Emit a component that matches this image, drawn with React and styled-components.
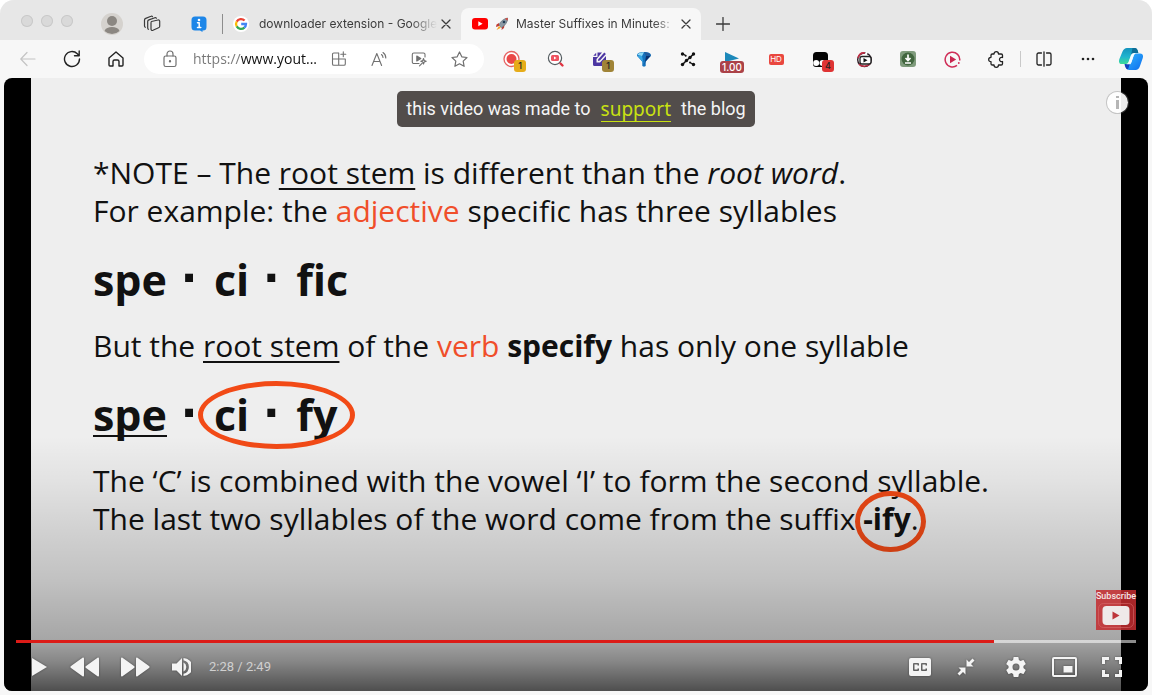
import React from "react";
import styled, { createGlobalStyle } from "styled-components";

const Global = createGlobalStyle`
  * { box-sizing: border-box; }
  body { margin: 0; background: #fff; font-family: Inter, "Liberation Sans", sans-serif; }
  button { border: 0; padding: 0; background: none; color: inherit; font: inherit; }
`;

const Browser = styled.div`
  min-height: 100vh;
  display: flex;
  flex-direction: column;
  background: #f7f7f7;
  border-radius: 14px 14px 0 0;
  overflow: hidden;
`;

const TabStrip = styled.header`
  height: 40px;
  display: flex;
  align-items: flex-end;
  background: #e7e7e7;
  color: #3b3b3b;
`;

const TrafficLights = styled.div`
  display: flex;
  gap: 8px;
  padding: 0 27px 13px 21px;
`;

const Light = styled.button`
  width: 12px;
  height: 12px;
  border-radius: 50%;
  background: #d9d9d9;
  box-shadow: inset 0 0 0 1px #c9c9c9;
`;

const StripButton = styled.button`
  width: ${(p) => p.$width || 40}px;
  height: 32px;
  display: grid;
  place-items: center;
  flex: none;
`;

const Separator = styled.span`
  width: 1px;
  height: ${(p) => p.$height}px;
  margin: ${(p) => p.$margin};
  background: ${(p) => p.$color};
  flex: none;
`;

const Tab = styled.div`
  width: ${(p) => p.$width}px;
  height: 32px;
  display: flex;
  align-items: center;
  gap: 8px;
  padding: 0 8px 0 ${(p) => (p.$active ? 11 : 10)}px;
  border-radius: 8px 8px 0 0;
  background: ${(p) => (p.$active ? "#f7f7f7" : "transparent")};
`;

const TabLabel = styled.a`
  flex: 1;
  min-width: 0;
  margin-left: ${(p) => (p.$active ? 0 : 2)}px;
  margin-right: -8px;
  overflow: hidden;
  white-space: nowrap;
  font-size: 12px;
  line-height: 18px;
  color: #3b3b3b;
  text-decoration: none;
  mask-image: linear-gradient(90deg, #000 84%, transparent 99%);
`;

const CloseButton = styled.button`
  width: 14px;
  height: 14px;
  display: grid;
  place-items: center;
`;

const Toolbar = styled.nav`
  height: 38px;
  display: flex;
  align-items: center;
  padding-left: 6px;
  color: #222;
`;

const ToolButton = styled.button`
  position: relative;
  width: ${(p) => p.$width || 44}px;
  height: 32px;
  flex: none;
  display: grid;
  place-items: center;
`;

const AddressBar = styled.div`
  flex: 1;
  min-width: 0;
  height: 30px;
  margin: 0 6px;
  padding: 0 5px 0 17px;
  display: flex;
  align-items: center;
  border-radius: 15px;
  background: #fff;
  color: #707070;
`;

const UrlInput = styled.input`
  flex: 1;
  min-width: 0;
  margin-left: 14px;
  padding: 0;
  border: 0;
  outline: 0;
  font: 14px/20px "Open Sans", sans-serif;
  color: transparent;
  background: linear-gradient(90deg, #777 0 48px, #111 48px);
  background-clip: text;
  -webkit-background-clip: text;
`;

const Badge = styled.span`
  position: absolute;
  left: ${(p) => (p.$wide ? 10 : 24)}px;
  top: ${(p) => (p.$wide ? 18 : 17)}px;
  width: ${(p) => (p.$wide ? 24 : 12)}px;
  height: 12px;
  border-radius: 3px;
  background: ${(p) => p.$color};
  color: ${(p) => (p.$wide ? "#fff" : "#222")};
  font-size: ${(p) => (p.$wide ? 10 : 9)}px;
  font-weight: 500;
  line-height: 12px;
  text-align: center;
`;

const Player = styled.main`
  flex: 1;
  display: grid;
  grid-template: 1fr / minmax(0, 1fr);
  margin: 0 4px 4px;
  border-radius: 8px;
  overflow: hidden;
  background: #000;
`;

const Slide = styled.article`
  grid-area: 1 / 1;
  margin: 0 27px;
  padding: 76px 62px;
  background: #eee;
  color: #111;
  font-family: "Open Sans", "Noto Sans", sans-serif;
`;

const Sentence = styled.p`
  margin: 0;
  font-size: 30px;
  line-height: 38px;
  white-space: nowrap;
`;

const Syllables = styled.p`
  margin: 0;
  height: 97px;
  font-size: 43px;
  font-weight: 700;
  line-height: 100px;
  white-space: nowrap;
`;

const Dot = styled.span`
  margin: 0 3px;
  font-family: "Liberation Sans", sans-serif;
  font-size: 56px;
  line-height: 1px;
`;

const Underlined = styled.span`
  text-decoration: underline;
  text-decoration-thickness: 2px;
  text-underline-offset: 4px;
  text-decoration-skip-ink: none;
`;

const Accent = styled.span`
  color: #f04e2a;
`;

const Circled = styled.span`
  position: relative;
`;

const Ring = styled.span`
  position: absolute;
  inset: ${(p) => p.$inset};
  border: 5px solid #f24a16;
  border-radius: 50%;
`;

const Overlay = styled.section`
  grid-area: 1 / 1;
  z-index: 1;
  display: flex;
  flex-direction: column;
  background: linear-gradient(
    0deg,
    rgba(0, 0, 0, 0.67) 0,
    rgba(0, 0, 0, 0.43) 30px,
    rgba(0, 0, 0, 0.3) 52px,
    rgba(0, 0, 0, 0.19) 111px,
    rgba(0, 0, 0, 0.13) 155px,
    rgba(0, 0, 0, 0.05) 210px,
    transparent 255px
  );
`;

const OverlayTop = styled.div`
  display: grid;
  grid-template-columns: 1fr auto 1fr;
  align-items: start;
  padding: 13px 20px 0;
`;

const Banner = styled.p`
  grid-column: 2;
  height: 36px;
  margin: 0;
  padding: 0 9px;
  display: flex;
  align-items: center;
  gap: 10px;
  border-radius: 5px;
  background: #524d4b;
  color: #f5f5f5;
  font-family: Roboto, sans-serif;
  font-size: 18px;
  line-height: 24px;
  white-space: nowrap;
`;

const SupportLink = styled.a`
  color: #c9e112;
  font-family: "Noto Sans", sans-serif;
  font-size: 19px;
  line-height: 24px;
  text-decoration: none;
  border-bottom: 1px solid #c9e112;
`;

const InfoButton = styled.button`
  justify-self: end;
  width: 21px;
  height: 21px;
  margin-top: 1px;
  border-radius: 50%;
  background: rgba(255, 255, 255, 0.93);
  box-shadow: 0 0 0 1px rgba(120, 120, 120, 0.35);
  display: grid;
  place-items: center;
`;

const Subscribe = styled.button`
  align-self: flex-end;
  width: 40px;
  height: 40px;
  margin: auto 12px 10px 0;
  display: flex;
  flex-direction: column;
  align-items: center;
  justify-content: space-between;
  background: rgba(196, 44, 48, 0.86);
  color: #f5e6e6;
  font-family: Roboto, sans-serif;
  font-size: 9px;
  font-weight: 500;
  line-height: 12px;
`;

const Seek = styled.input`
  appearance: none;
  height: 3px;
  margin: 0 12px;
  background: linear-gradient(
    90deg,
    #dc1b17 ${(p) => p.$played}%,
    rgba(255, 255, 255, 0.55) ${(p) => p.$played}%
  );
  &::-webkit-slider-thumb { appearance: none; width: 0; height: 0; }
`;

const Controls = styled.div`
  height: 48px;
  display: flex;
  align-items: center;
  padding: 0 8px 0 11px;
  color: #f4f4f4;
`;

const ControlButton = styled.button`
  width: ${(p) => p.$width || 48}px;
  height: 48px;
  display: grid;
  place-items: center;
  filter: drop-shadow(0 0 1px rgba(0, 0, 0, 0.4));
`;

const Time = styled.span`
  flex: 1;
  padding-left: 10px;
  font: 13px/16px Roboto, sans-serif;
  color: #d0d0d0;
`;

const Icon = ({ w = 20, h = w, box, line, children }) => (
  <svg
    width={w}
    height={h}
    viewBox={box || `0 0 ${w} ${h}`}
    fill={line ? "none" : "currentColor"}
    stroke={line ? "currentColor" : "none"}
    strokeWidth={line}
    strokeLinecap="round"
    strokeLinejoin="round"
    aria-hidden="true"
  >
    {children}
  </svg>
);

const Close = () => (
  <CloseButton aria-label="Close tab">
    <Icon w={10} line={1.3}><path d="M1 1l8 8M9 1L1 9" /></Icon>
  </CloseButton>
);

const GoogleLogo = () => (
  <svg width="16" height="16" viewBox="0 0 16 16" aria-hidden="true">
    <circle cx="8" cy="8" r="8" fill="#fff" />
    <g fill="none" strokeWidth="2.3">
      <path d="M11.6 4.5A5 5 0 0 0 3.7 5.6" stroke="#ea4335" />
      <path d="M3.7 5.5a5 5 0 0 0 0 5" stroke="#fbbc05" />
      <path d="M3.7 10.4a5 5 0 0 0 7.7 1.2" stroke="#34a853" />
      <path d="M8.2 8h4.8a5 5 0 0 1-1.7 3.7" stroke="#4285f4" />
    </g>
  </svg>
);

const YouTubeLogo = () => (
  <svg width="16" height="12" viewBox="0 0 16 12" aria-hidden="true">
    <rect width="16" height="11.5" rx="3" fill="#f00" />
    <path d="M6.3 3.3v5l4.3-2.5z" fill="#fff" />
  </svg>
);

const Rocket = () => (
  <svg width="12" height="14" viewBox="0 0 12 14" aria-hidden="true">
    <path d="M3 6L.5 7.5 0 10l3-1zM6 10l-.5 3L8 11l.5-3z" fill="#c43a31" />
    <path d="M3 8C4.5 4 8 1.5 11.8 1 11.7 5 9 8.7 5.5 10.6z" fill="#8b9aa5" stroke="#56626d" strokeWidth=".6" />
    <path d="M9 1.8c.8-.4 1.8-.7 2.8-.8 0 1-.2 2-.5 2.8z" fill="#d9483b" />
    <circle cx="8" cy="5" r="1.3" fill="#243d55" />
    <path d="M3 9l-2.5 4L5 10.7z" fill="#f6a623" />
  </svg>
);

const RecordIcon = () => (
  <svg width="18" height="18" viewBox="0 0 18 18" aria-hidden="true">
    <circle cx="8.5" cy="9" r="7.5" fill="#fff" stroke="#e66363" strokeWidth="1.3" />
    <circle cx="8.5" cy="9" r="5" fill="#ea4848" />
  </svg>
);

const VideoSearchIcon = () => (
  <svg width="18" height="18" viewBox="0 0 18 18" aria-hidden="true">
    <circle cx="8" cy="8" r="6.6" fill="#fff" stroke="#555d61" strokeWidth="1.2" />
    <rect x="4" y="5" width="8" height="6" rx="1.5" fill="#ee5360" />
    <path d="M7 6.5v3L9.5 8z" fill="#fff" />
    <path d="M13.5 13.5l2 2" stroke="#df3341" strokeWidth="2.4" strokeLinecap="round" />
  </svg>
);

const NotesIcon = () => (
  <svg width="18" height="18" viewBox="0 0 18 18" aria-hidden="true">
    <path d="M6.500 2.500H11L5.500 9v3.500H9l6-6.500v8.500a1.500 1.500 0 0 1-1.500 1.500h-10A1.500 1.500 0 0 1 2 14.500V7h4.500z" fill="#4c36a2" />
    <path d="M5.200 2.800v2.900H2.300z" fill="#4c36a2" />
    <path d="M7 11l.3-1.800 6-6.700 1.600 1.500-6 6.600z" fill="#4c36a2" />
  </svg>
);

const GemIcon = () => (
  <svg width="16" height="16" viewBox="0 0 16 16" aria-hidden="true">
    <path d="M1 4.500C1 2.500 3.200 1 8 1s7 1.500 7 3.500c0 .8-4.800 5-5.300 6.500v4l-1.700.8L6.300 15v-4C5.800 9.500 1 5.300 1 4.500z" fill="#1673bd" />
    <path d="M1.500 4C2 2 5 1.300 8 1.300L6 5z" fill="#8edbf8" />
    <path d="M1.300 4.800L6 5l1.600 8-1.100-2.500z" fill="#35a7e4" />
    <path d="M8 1.300c3.500 0 6 1 6.700 3L10 5z" fill="#215b9d" />
    <path d="M14.600 4.800L10 5l-1.500 9 1-3.500z" fill="#0b316f" />
  </svg>
);

const NodesIcon = () => (
  <svg width="16" height="16" viewBox="0 0 16 16" aria-hidden="true">
    <path d="M2.500 13.500L6.500 9.500l3.500-3L13.500 3" stroke="#111" strokeWidth="1.600" fill="none" />
    <path d="M2.500 2.500l3 2M10 11.500l3.500 2" stroke="#111" strokeWidth="1.200" />
    {[[2.5, 3], [13.5, 3], [6.5, 9.5], [10, 6.5], [2.5, 13.5], [13.5, 13.5]].map(([x, y]) => (
      <circle key={`${x}-${y}`} cx={x} cy={y} r="1.7" fill="#111" />
    ))}
    <circle cx="5.700" cy="4.700" r="1" fill="#111" />
    <circle cx="10" cy="11.500" r="1" fill="#111" />
  </svg>
);

const HdIcon = styled.span`
  width: 15px;
  height: 11px;
  border-radius: 2px;
  background: #e9473f;
  color: #fff;
  font-size: 8px;
  line-height: 11px;
`;

const MaskIcon = () => (
  <svg width="17" height="17" viewBox="0 0 17 17" aria-hidden="true">
    <path d="M4.500 1h8A3.500 3.500 0 0 1 16 4.500V12H1V4.500A3.500 3.500 0 0 1 4.500 1z" fill="#050505" />
    <path d="M1 10h15v3a3 3 0 0 1-3 3H4a3 3 0 0 1-3-3z" fill="#050505" />
    <circle cx="4.200" cy="12" r="3" fill="#fff" />
    <circle cx="10.500" cy="12" r="3" fill="#fff" />
  </svg>
);

const TvIcon = () => (
  <svg width="17" height="17" viewBox="0 0 17 17" aria-hidden="true">
    <circle cx="8.5" cy="8.8" r="6.8" fill="#fff" stroke="#2c1c25" strokeWidth="1.4" />
    <path d="M2 7c1-4 4-5.5 7-5M3 13c2 3 8 3 11 0" stroke="#c02f45" strokeWidth="1.5" fill="none" />
    <path d="M8.500 6l2.500-5" stroke="#fff" strokeWidth="2" />
    <rect x="4" y="5.5" width="11" height="7.500" rx="2" fill="#fff" stroke="#222" strokeWidth="1.3" />
    <path d="M7.5 7v4.5l4-2.200z" fill="#111" />
  </svg>
);

const DownloadIcon = () => (
  <svg width="16" height="16" viewBox="0 0 16 16" aria-hidden="true">
    <rect width="16" height="16" rx="3" fill="#7f9b7c" />
    <circle cx="8" cy="8" r="6.5" fill="#42663f" />
    <path d="M8 3.5V9M5.5 7L8 9.5 10.5 7M5 12h6" stroke="#fff" strokeWidth="1.7" fill="none" />
  </svg>
);

const PlayCircleIcon = () => (
  <svg width="17" height="17" viewBox="0 0 17 17" aria-hidden="true">
    <path d="M13 14.300A7.300 7.300 0 1 1 15.700 9.500" fill="none" stroke="#cf2d57" strokeWidth="1.5" />
    <circle cx="14.800" cy="12" r=".9" fill="#cf2d57" />
    <path d="M6 4.7v7.6l6.2-3.8z" fill="#c8264f" />
  </svg>
);

const CopilotLogo = () => (
  <svg width="24" height="22" viewBox="0 0 24 22" aria-hidden="true">
    <defs>
      <linearGradient id="copilotLeft" x1="0" y1="0" x2="0" y2="1">
        <stop offset="0" stopColor="#1593bd" />
        <stop offset=".55" stopColor="#20b5cf" />
        <stop offset="1" stopColor="#3ddc98" />
      </linearGradient>
      <linearGradient id="copilotRight" x1="0" y1="0" x2="1" y2="1">
        <stop offset="0" stopColor="#36b8ff" />
        <stop offset="1" stopColor="#0b6ced" />
      </linearGradient>
    </defs>
    <path d="M8 0h7.500c2.300 0 3.200 1.800 3.800 5H15c-2 0-2.800 1-3.400 3L9.500 14c-.6 1.500-1.600 2-3.500 2H3c-3 0-3.500-2.200-2.600-5L3.500 3.500C4.500 1.200 6 0 8 0z" fill="url(#copilotLeft)" />
    <path d="M13.500 0h2.300c2 0 2.900 1.800 3.500 5H15c-1.500 0-2.400.7-3 2z" fill="#0f6d96" />
    <path d="M17 5.500h4c3 0 3.500 2.200 2.600 5L21 18c-.9 2.500-2.300 4-4.500 4h-6c-2.300 0-3.300-1.800-3.900-5H9c2 0 3-1 3.600-3l2-6c.5-1.600 1-2.500 2.400-2.500z" fill="url(#copilotRight)" />
    <path d="M5.500 16H8c2 0 3-.8 3.600-2.500L9.500 20c-.3 1-.8 1.700-1.500 1.300-1.300-.8-2-3-2.500-5.300z" fill="#1344bd" />
    <path d="M13.800 5.500h3c-1.300.3-1.900 1.300-2.400 2.700L12.300 14c-.5 1.500-1.500 2.300-3.500 2.300H7c1.700-.2 2.400-1.100 2.900-2.400L12 8c.5-1.300 1-2.100 1.800-2.500z" fill="#f4fdff" />
  </svg>
);

const PlayTile = () => (
  <svg width="36" height="27" viewBox="0 0 36 27" aria-hidden="true">
    <rect x=".5" y=".5" width="35" height="24" rx="5" fill="none" stroke="#d9696b" strokeWidth=".6" />
    <rect x="4.500" y="3" width="27" height="19" rx="4" fill="#efe9e9" />
    <path d="M14.500 8.500v8l7-4z" fill="#bd343a" />
  </svg>
);

export default function App() {
  return (
    <>
      <Global />
      <Browser>
        <TabStrip>
          <TrafficLights>
            <Light aria-label="Close" />
            <Light aria-label="Minimize" />
            <Light aria-label="Zoom" />
          </TrafficLights>
          <StripButton $width={24} aria-label="Profile">
            <Icon w={22}>
              <circle cx="11" cy="11" r="11" fill="#d5d2ce" />
              <circle cx="11" cy="8" r="5" fill="#8b8782" />
              <path d="M3.500 18c1-3 4-4 7.500-4s6.500 1 7.500 4a11 11 0 0 1-15 0z" fill="#8b8782" />
            </Icon>
          </StripButton>
          <StripButton $width={56} aria-label="Workspaces">
            <Icon w={18} line={1.2}>
              <path d="M8.500 6.500l6.500-1.500c1-.2 1.700.3 1.700 1.200v5c0 .8-.4 1.300-1.200 1.600l-5.500 2.500c-1.200.5-2-.1-2-1.200V8c0-.8 0-1.300.5-1.500z" />
              <path d="M5.500 14.300c-.6-.2-.8-.7-.8-1.300V6.500c0-.9.400-1.300 1.200-1.600l6-2.200c.7-.2 1.200 0 1.500.5" />
              <path d="M2.300 12.300c-.5-.3-.8-.7-.8-1.300V5c0-.8.400-1.300 1.200-1.600L8 1.300c.7-.3 1.200-.1 1.500.4" />
            </Icon>
          </StripButton>
          <StripButton $width={38} aria-label="Information tab">
            <Icon w={16}>
              <path d="M4 .5h8A3.500 3.500 0 0 1 15.500 4v7a3.500 3.500 0 0 1-3.500 3.500h-.5V16L9 14.500H4A3.500 3.500 0 0 1 .5 11V4A3.500 3.500 0 0 1 4 .5z" fill="#1d86e8" />
              <circle cx="8" cy="4" r="1.300" fill="#fff" />
              <path d="M6.500 6.800H8.200v4.700M6.500 11.500h3.300" stroke="#fff" strokeWidth="1.500" fill="none" />
            </Icon>
          </StripButton>
          <Separator $height={20} $margin="0 0 6px 4px" $color="#8d8d8d" />
          <Tab $width={238}>
            <GoogleLogo />
            <TabLabel href="#search">downloader extension - Google</TabLabel>
            <Close />
          </Tab>
          <Tab $width={240} $active>
            <YouTubeLogo />
            <Rocket />
            <TabLabel href="#video" $active>Master Suffixes in Minutes:</TabLabel>
            <Close />
          </Tab>
          <StripButton $width={43} aria-label="New tab">
            <Icon w={14} line={1.300}><path d="M7 .5v13M.5 7h13" /></Icon>
          </StripButton>
        </TabStrip>

        <Toolbar>
          <ToolButton aria-label="Back">
            <Icon w={16} line={1.200}><g stroke="#c4c4c4"><path d="M15 8H1M7 1.500L.8 8 7 14.500" /></g></Icon>
          </ToolButton>
          <ToolButton aria-label="Reload">
            <Icon w={18} line={1.400}><path d="M16.500 9A7.500 7.500 0 1 1 14.300 3.700L16 5.500M16.200 1v4.700h-4.700" /></Icon>
          </ToolButton>
          <ToolButton aria-label="Home">
            <Icon w={16} line={1.400}><path d="M1 7L8 1l7 6v7a1 1 0 0 1-1 1h-3V10.500A1.500 1.500 0 0 0 9.500 9h-3A1.500 1.500 0 0 0 5 10.500V15H2a1 1 0 0 1-1-1z" /></Icon>
          </ToolButton>
          <AddressBar>
            <Icon w={18} line={1.200}>
              <rect x="3" y="6" width="12" height="10.500" rx="1.800" />
              <path d="M6 6V4a3 3 0 0 1 6 0v2" />
              <circle cx="9" cy="11.300" r=".6" fill="currentColor" />
            </Icon>
            <UrlInput aria-label="Address" defaultValue="https://www.yout..." />
            <ToolButton $width={40} aria-label="Apps">
              <Icon w={16} line={1.100}><path d="M7.500 2H2.800A1.300 1.300 0 0 0 1.500 3.300V13A1.300 1.300 0 0 0 2.800 14.300H13A1.300 1.300 0 0 0 14.300 13V8H1.500M7.700 2v12.300M12.300.8v5M9.800 3.300h5" /></Icon>
            </ToolButton>
            <ToolButton $width={40} aria-label="Read aloud">
              <Icon w={16} line={1.100}><path d="M1 14.500L5.800 2.500l4.800 12M2.600 10.500H9M10.500 3.500a4 4 0 0 1 1.500 3M12 1.500a6.500 6.500 0 0 1 2.800 5.500" /></Icon>
            </ToolButton>
            <ToolButton $width={40} aria-label="Enhance video">
              <Icon w={16} line={1.100}>
                <path d="M8 12.500H2.800A1.500 1.500 0 0 1 1.300 11V3.500A1.500 1.500 0 0 1 2.800 2H12.500A1.500 1.500 0 0 1 14 3.500V6" />
                <path d="M5.800 5v5l4-2.500z" fill="currentColor" />
                <path d="M12.500 7.500l.7 2 2 .7-2 .8-.7 2-.7-2-2-.8 2-.7zM8.500 14.800l2.500-2.500" />
              </Icon>
            </ToolButton>
            <ToolButton $width={40} aria-label="Favorite">
              <Icon w={17} line={1.200}><path d="M8.500 1l2.300 4.800 5.200.7-3.800 3.600.9 5.200-4.600-2.500-4.600 2.500.9-5.200L1 6.500l5.200-.7z" /></Icon>
            </ToolButton>
          </AddressBar>
          <ToolButton aria-label="Screen recorder"><RecordIcon /><Badge $color="#e6ac19">1</Badge></ToolButton>
          <ToolButton aria-label="Video search"><VideoSearchIcon /></ToolButton>
          <ToolButton aria-label="Notes"><NotesIcon /><Badge $color="#a08437">1</Badge></ToolButton>
          <ToolButton aria-label="Gem extension"><GemIcon /></ToolButton>
          <ToolButton aria-label="Nodes extension"><NodesIcon /></ToolButton>
          <ToolButton aria-label="Video speed">
            <Icon w={16}><path d="M1 1v10l14-3.500z" fill="#1d89ba" /></Icon>
            <Badge $wide $color="#ab4248">1.00</Badge>
          </ToolButton>
          <ToolButton aria-label="Auto HD"><HdIcon>HD</HdIcon></ToolButton>
          <ToolButton aria-label="Scripts"><MaskIcon /><Badge $color="#df3434">4</Badge></ToolButton>
          <ToolButton aria-label="TV extension"><TvIcon /></ToolButton>
          <ToolButton aria-label="Downloader"><DownloadIcon /></ToolButton>
          <ToolButton aria-label="Player extension"><PlayCircleIcon /></ToolButton>
          <ToolButton aria-label="Extensions">
            <Icon w={17} line={1.300}><path d="M3 4.300C3 3.500 3.500 3 4.300 3H6c0-1.500 1-2.300 2.300-2.300S10.500 1.500 10.500 3h2.700c.8 0 1.300.5 1.300 1.300v2.200c-1.700-.5-3 .5-3 2s1.300 2.500 3 2v2.200c0 .8-.5 1.300-1.300 1.300h-2.700c0 1.500-.9 2.300-2.200 2.300S6 15.500 6 14H4.300C3.500 14 3 13.500 3 12.700v-2C1.500 10.700.7 9.800.7 8.500S1.500 6.300 3 6.300z" /></Icon>
          </ToolButton>
          <Separator $height={16} $margin="0 1px 0 2px" $color="#c9c9c9" />
          <ToolButton aria-label="Split screen">
            <Icon w={16} line={1.300}><path d="M5.500 2H2.500A1.500 1.500 0 0 0 1 3.500v9A1.500 1.500 0 0 0 2.500 14h3M8 .8v14.400M10.500 2h3A1.500 1.500 0 0 1 15 3.500v9a1.500 1.500 0 0 1-1.500 1.500h-3" /></Icon>
          </ToolButton>
          <ToolButton aria-label="More">
            <Icon w={14}><circle cx="2" cy="7" r="1.300" /><circle cx="7" cy="7" r="1.300" /><circle cx="12" cy="7" r="1.300" /></Icon>
          </ToolButton>
          <ToolButton $width={42} aria-label="Copilot"><CopilotLogo /></ToolButton>
        </Toolbar>

        <Player>
          <Slide>
            <Sentence>*NOTE – The <Underlined>root stem</Underlined> is different than the <em>root word</em>.</Sentence>
            <Sentence>For example: the <Accent>adjective</Accent> specific has three syllables</Sentence>
            <Syllables>spe <Dot>·</Dot> ci <Dot>·</Dot> fic</Syllables>
            <Sentence>But the <Underlined>root stem</Underlined> of the <Accent>verb</Accent> <b>specify</b> has only one syllable</Sentence>
            <Syllables>
              <Underlined>spe</Underlined> <Dot>·</Dot>{" "}
              <Circled>ci <Dot>·</Dot> fy<Ring $inset="-4px -18px -5px -16px" /></Circled>
            </Syllables>
            <Sentence>The ‘C’ is combined with the vowel ‘I’ to form the second syllable.</Sentence>
            <Sentence>
              The last two syllables of the word come from the suffix{" "}
              <Circled><b>-ify</b>.<Ring $inset="-7px -7px -13px -8px" /></Circled>
            </Sentence>
          </Slide>
          <Overlay>
            <OverlayTop>
              <Banner>
                <span>this video was made to</span>
                <SupportLink href="#support">support</SupportLink>
                <span>the blog</span>
              </Banner>
              <InfoButton aria-label="Info">
                <Icon w={5} h={13}><g fill="#b5b5b5"><rect x="1" width="3" height="2" /><rect x="1" y="4" width="3" height="9" /></g></Icon>
              </InfoButton>
            </OverlayTop>
            <Subscribe>Subscribe<PlayTile /></Subscribe>
            <Seek type="range" aria-label="Seek" min="0" max="1000" defaultValue="873" $played={87.3} />
            <Controls>
              <ControlButton aria-label="Play"><Icon w={16} h={20}><path d="M1 1v18l15-9z" /></Icon></ControlButton>
              <ControlButton $width={44} aria-label="Rewind">
                <Icon w={30} h={20}><path d="M14 1.500v17c0 1-.7 1.300-1.500.7L1 11c-.8-.6-.8-1.400 0-2L12.500.8c.8-.6 1.500-.3 1.500.7zM29 1.500v17c0 1-.7 1.300-1.500.7L16 11c-.8-.6-.8-1.400 0-2L27.500.8c.8-.6 1.500-.3 1.500.7z" /></Icon>
              </ControlButton>
              <ControlButton $width={56} aria-label="Fast forward">
                <Icon w={30} h={20}><path d="M1 1.500v17c0 1 .7 1.300 1.500.7L14 11c.8-.6.8-1.400 0-2L2.500.8C1.700.2 1 .5 1 1.500zM16 1.500v17c0 1 .7 1.300 1.500.7L29 11c.8-.6.8-1.400 0-2L17.500.8c-.8-.6-1.500-.3-1.500.7z" /></Icon>
              </ControlButton>
              <ControlButton $width={36} aria-label="Mute">
                <Icon w={20}><path d="M1 6.500v7h4.500L11 19V1L5.500 6.500zM12.500 5.500v9a5 5 0 0 0 0-9zM12.500 1v2.200a7 7 0 0 1 0 13.600V19a9 9 0 0 0 0-18z" /></Icon>
              </ControlButton>
              <Time>2:28 / 2:49</Time>
              <ControlButton aria-label="Captions">
                <Icon w={22} h={18}>
                  <path fillRule="evenodd" d="M2 0h18a2 2 0 0 1 2 2v14a2 2 0 0 1-2 2H2a2 2 0 0 1-2-2V2a2 2 0 0 1 2-2zm3 5a1 1 0 0 0-1 1v6a1 1 0 0 0 1 1h4a1 1 0 0 0 1-1v-1.500H8.500v1h-3v-5h3v1H10V6a1 1 0 0 0-1-1zm8 0a1 1 0 0 0-1 1v6a1 1 0 0 0 1 1h4a1 1 0 0 0 1-1v-1.500h-1.500v1h-3v-5h3v1H18V6a1 1 0 0 0-1-1z" />
                </Icon>
              </ControlButton>
              <ControlButton $width={44} aria-label="Exit expanded view">
                <Icon w={18}><path d="M9.500 1.500L12 4l3.500-3.500 2 2L14 6l2.500 2.500h-7zM1.500 9.500h7v7L6 14l-3.500 3.500-2-2L4 12z" /></Icon>
              </ControlButton>
              <ControlButton $width={56} aria-label="Settings">
                <Icon w={20} box="2 2 20 20"><path d="M19.430 12.980c.04-.32.07-.64.07-.98s-.03-.66-.07-.98l2.110-1.650c.19-.15.24-.42.12-.64l-2-3.460c-.12-.22-.39-.3-.61-.22l-2.490 1c-.52-.4-1.080-.73-1.690-.98l-.38-2.650A.488.488 0 0 0 14 2h-4c-.25 0-.46.18-.49.42l-.38 2.650c-.61.25-1.170.59-1.690.98l-2.490-1c-.23-.09-.49 0-.61.22l-2 3.460c-.13.22-.07.49.12.64l2.110 1.650c-.04.32-.07.65-.07.98s.03.66.07.98l-2.110 1.650c-.19.15-.24.42-.12.64l2 3.460c.12.22.39.3.61.22l2.490-1c.52.4 1.080.73 1.690.98l.38 2.650c.03.24.24.42.49.42h4c.25 0 .46-.18.49-.42l.38-2.650c.61-.25 1.170-.59 1.690-.98l2.490 1c.23.09.49 0 .61-.22l2-3.460c.12-.22.07-.49-.12-.64zM12 15.500a3.500 3.500 0 1 1 0-7 3.500 3.500 0 0 1 0 7z" /></Icon>
              </ControlButton>
              <ControlButton $width={40} aria-label="Picture in picture">
                <Icon w={25} h={20}><path fillRule="evenodd" d="M2 0h21a2 2 0 0 1 2 2v16a2 2 0 0 1-2 2H2a2 2 0 0 1-2-2V2a2 2 0 0 1 2-2zm0 2v16h21V2z" /><path d="M11.500 9h9v6.500h-9z" /></Icon>
              </ControlButton>
              <ControlButton $width={56} aria-label="Full screen">
                <Icon w={20}><path d="M0 0h7v3H3v4H0zM13 0h7v7h-3V3h-4zM0 13h3v4h4v3H0zM17 13h3v7h-7v-3h4z" /></Icon>
              </ControlButton>
            </Controls>
          </Overlay>
        </Player>
      </Browser>
    </>
  );
}
